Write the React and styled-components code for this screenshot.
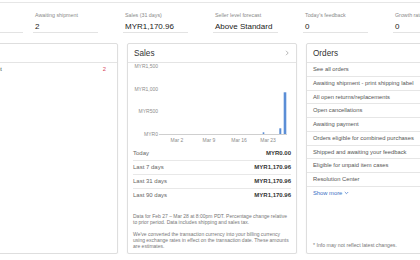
import { createGlobalStyle, styled } from "styled-components";

const GlobalStyle = createGlobalStyle`
  html, body {
    margin: 0;
    padding: 0;
    background: #fff;
    overflow: hidden;
  }
  body {
    font-family: "Liberation Sans", Arial, sans-serif;
    color: #333;
  }
  * { box-sizing: border-box; }
`;

const Page = styled.div`
  width: 560px;
  margin-top: 2px;
  margin-left: -60px;
  border-top: 1px solid #e6e6e6;
`;

const StatsRow = styled.div`
  display: flex;
  padding-top: 9px;
`;

const Stat = styled.div`
  flex: 0 0 ${(p) => p.$width || 65}px;
  margin-right: ${(p) => p.$gap ?? 25}px;
  border-bottom: 1px solid #e3e3e3;
  padding-left: 2px;
  white-space: nowrap;
  overflow: hidden;
`;

const StatLabel = styled.div`
  font-size: 5.3px;
  line-height: 7px;
  color: #8a8a8a;
`;

const StatValue = styled.div`
  font-size: 8px;
  line-height: 10px;
  margin-top: 3px;
  color: #222;
`;

const Cards = styled.div`
  display: flex;
  gap: 9px;
  padding-left: 8px;
  margin-top: 10px;
`;

const Card = styled.section`
  flex: 0 0 170px;
  border: 1px solid #dedede;
  border-radius: 2px;
  background: #fff;
  box-shadow: 0 1px 2px rgba(0, 0, 0, 0.06);
  display: flex;
  flex-direction: column;
`;

const CardHeader = styled.header`
  height: 19px;
  border-bottom: 1px solid #e4e4e4;
  display: flex;
  align-items: center;
  justify-content: space-between;
  padding: 0 7px 0 6px;
`;

const CardTitle = styled.h2`
  margin: 0;
  font-size: 8.2px;
  font-weight: 400;
  color: #333;
`;

const Chart = styled.svg`
  display: block;
  font-family: "Liberation Sans", Arial, sans-serif;
`;

const Totals = styled.div`
  padding: 0 5px;
`;

const TotalRow = styled.div`
  display: flex;
  justify-content: space-between;
  height: 14px;
  line-height: 13px;
  font-size: 6px;
  color: #666;
  border-bottom: 1px solid #e8e8e8;

  &:last-child {
    border-bottom: none;
  }

  b {
    color: #333;
    font-weight: 700;
  }
`;

const Notes = styled.div`
  padding: 10px 5px 4px;
  font-size: 5px;
  line-height: 6px;
  color: #777;

  p {
    margin: 0;
  }
  p + p {
    margin-top: 6px;
  }
`;

const LinkList = styled.ul`
  list-style: none;
  margin: 0;
  padding: 0;
`;

const LinkItem = styled.li`
  height: 13.75px;
  line-height: 12.75px;
  padding: 0 6px;
  font-size: 5.8px;
  color: #555;
  white-space: nowrap;
  border-bottom: ${(p) => (p.$plain ? "none" : "1px solid #e6e6e6")};
  display: flex;
  justify-content: space-between;
`;

const Count = styled.span`
  color: #d8435c;
  padding-right: 5px;
`;

const ShowMore = styled.div`
  display: flex;
  align-items: center;
  gap: 2px;
  height: 12.75px;
  padding: 0 6px;
  font-size: 5.8px;
  color: #3a6fc4;
`;

const CardFoot = styled.div`
  margin-top: auto;
  padding: 0 6px 5px;
  font-size: 5.2px;
  line-height: 6px;
  color: #777;
`;

const stats = [
  { label: "Active listings", value: "41", width: 83, gap: 10 },
  { label: "Awaiting shipment", value: "2" },
  { label: "Sales (31 days)", value: "MYR1,170.96" },
  { label: "Seller level forecast", value: "Above Standard" },
  { label: "Today's feedback", value: "0" },
  { label: "Growth rate", value: "0" },
];

const totals = [
  ["Today", "MYR0.00"],
  ["Last 7 days", "MYR1,170.96"],
  ["Last 31 days", "MYR1,170.96"],
  ["Last 90 days", "MYR1,170.96"],
];

const orders = [
  "See all orders",
  "Awaiting shipment - print shipping label",
  "All open returns/replacements",
  "Open cancellations",
  "Awaiting payment",
  "Orders eligible for combined purchases",
  "Shipped and awaiting your feedback",
  "Eligible for unpaid item cases",
  "Resolution Center",
];

function SalesChart() {
  const yLabels = [
    ["MYR1,500", 4.8],
    ["MYR1,000", 27.8],
    ["MYR500", 49.8],
    ["MYR0", 72.8],
  ];
  const xLabels = [
    ["Mar 2", 49],
    ["Mar 9", 81],
    ["Mar 16", 111],
    ["Mar 23", 140],
  ];
  return (
    <Chart width="168" height="84" viewBox="0 0 168 84">
      {yLabels.map(([t, y]) => (
        <text key={t} x="30" y={y} fontSize="5" fill="#8c8c8c" textAnchor="end">
          {t}
        </text>
      ))}
      <line x1="31" x2="159" y1="71.5" y2="71.5" stroke="#cfcfcf" strokeWidth="1" />
      {xLabels.map(([t, x]) => (
        <text key={t} x={x} y="78.8" fontSize="5" fill="#8c8c8c" textAnchor="middle">
          {t}
        </text>
      ))}
      <rect x="134.7" y="69.3" width="1.6" height="1.7" fill="#5b8ed6" />
      <rect x="151.3" y="65.3" width="2" height="5.7" fill="#5b8ed6" />
      <rect x="155.7" y="29.3" width="2.6" height="41.7" fill="#5b8ed6" />
    </Chart>
  );
}

export default function App() {
  return (
    <>
      <GlobalStyle />
      <Page>
        <StatsRow>
          {stats.map((s) => (
            <Stat key={s.label} $width={s.width} $gap={s.gap}>
              <StatLabel>{s.label}</StatLabel>
              <StatValue>{s.value}</StatValue>
            </Stat>
          ))}
        </StatsRow>

        <Cards>
          <Card>
            <CardHeader>
              <CardTitle>Tasks</CardTitle>
            </CardHeader>
            <LinkList>
              <LinkItem $plain>
                <span>Awaiting shipment</span>
                <Count>2</Count>
              </LinkItem>
            </LinkList>
          </Card>

          <Card>
            <CardHeader>
              <CardTitle>Sales</CardTitle>
              <svg width="4" height="6" viewBox="0 0 4 6">
                <path d="M1 0.8 L3.2 3 L1 5.2" fill="none" stroke="#9a9a9a" strokeWidth="0.7" />
              </svg>
            </CardHeader>
            <SalesChart />
            <Totals>
              {totals.map(([k, v]) => (
                <TotalRow key={k}>
                  <span>{k}</span>
                  <b>{v}</b>
                </TotalRow>
              ))}
            </Totals>
            <Notes>
              <p>
                Data for Feb 27 – Mar 28 at 8:00pm PDT. Percentage change relative to prior
                period. Data includes shipping and sales tax.
              </p>
              <p>
                We've converted the transaction currency into your billing currency using
                exchange rates in effect on the transaction date. These amounts are estimates.
              </p>
            </Notes>
          </Card>

          <Card>
            <CardHeader>
              <CardTitle>Orders</CardTitle>
            </CardHeader>
            <LinkList>
              {orders.map((o) => (
                <LinkItem key={o}>{o}</LinkItem>
              ))}
            </LinkList>
            <ShowMore>
              Show more
              <svg width="5" height="4" viewBox="0 0 5 4">
                <path d="M0.8 1 L2.5 2.7 L4.2 1" fill="none" stroke="#3a6fc4" strokeWidth="0.7" />
              </svg>
            </ShowMore>
            <CardFoot>* Info may not reflect latest changes.</CardFoot>
          </Card>
        </Cards>
      </Page>
    </>
  );
}
